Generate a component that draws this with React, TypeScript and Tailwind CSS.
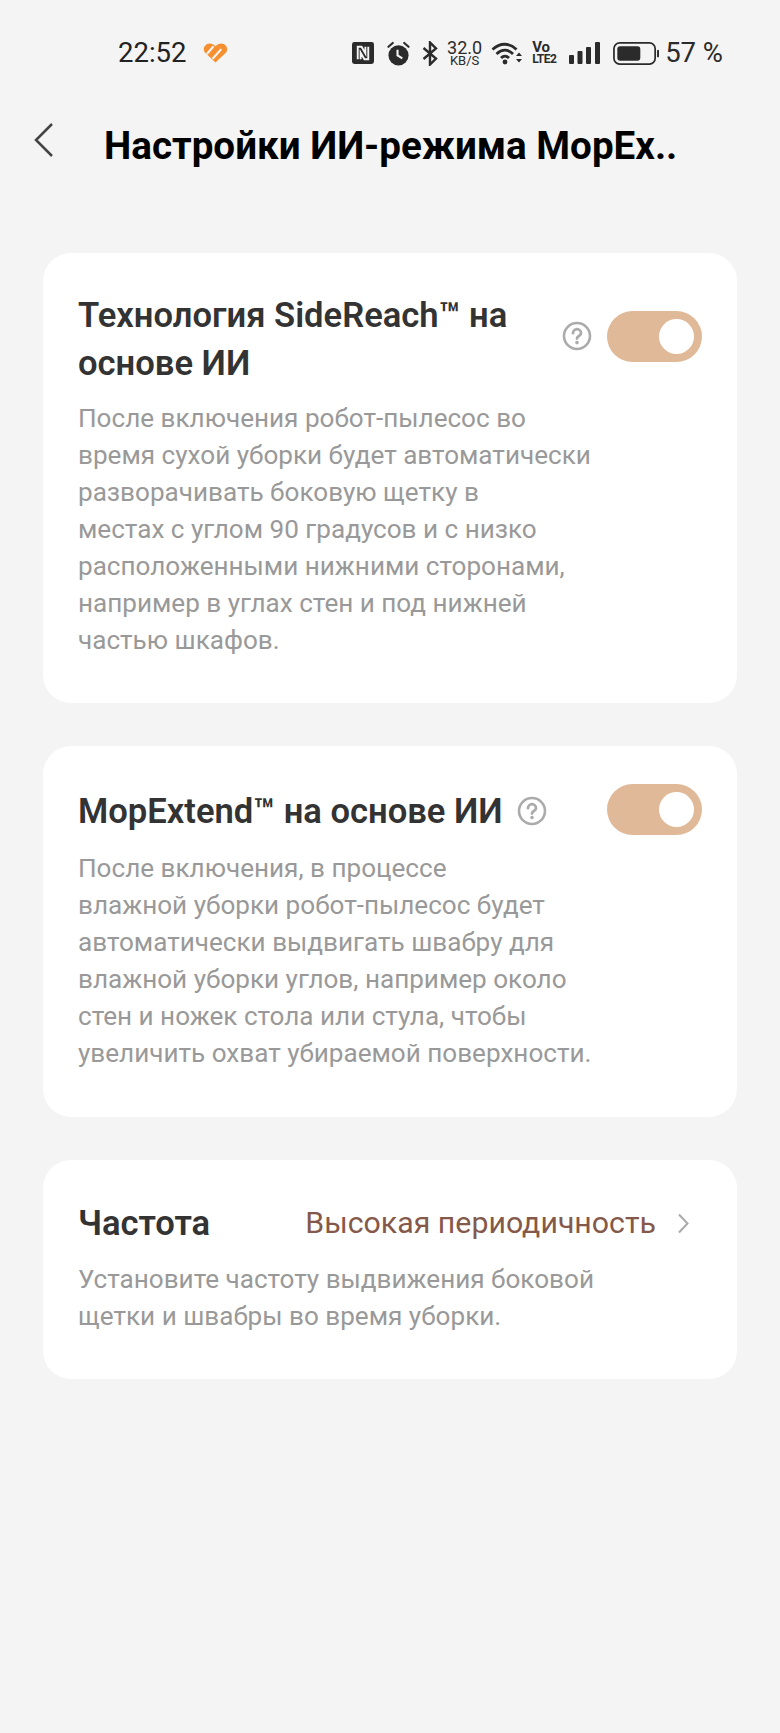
import React from 'react';

const Toggle = () => (
  <div className="flex h-[51px] w-[95px] shrink-0 items-center justify-end rounded-full bg-[#e0b998] pr-[8px]">
    <div className="h-[35px] w-[35px] rounded-full bg-white" />
  </div>
);

const HelpIcon = () => (
  <svg width="30" height="30" viewBox="0 0 30 30" fill="none" className="shrink-0">
    <circle cx="15" cy="15" r="13" stroke="#ababab" strokeWidth="2.600" />
    <path d="M11 12.200a4 4 0 0 1 8 0c0 2.600-4 2.800-4 5.400" stroke="#ababab" strokeWidth="2.800" strokeLinecap="round" />
    <circle cx="15" cy="21.600" r="1.800" fill="#ababab" />
  </svg>
);

const StatusBar = () => (
  <div className="flex h-[52px] items-center pl-[118px] pr-[57px] pt-[2px] text-[#222222]">
    <span className="text-[27.500px] leading-none">22:52</span>
    {/* heart */}
    <svg width="25" height="22" viewBox="0 0 26 22" className="ml-[17px]">
      <path d="M13 21 2 10.500C-1 7 2 1 7 1c2.500 0 4 1 6 3 2-2 3.500-3 6-3 5 0 8 6 5 9.500Z" fill="#f58f2f" />
      <path d="M4 12 11 4M10 17 19 7" stroke="#f4f4f4" strokeWidth="2.200" />
    </svg>
    <div className="ml-auto flex items-center">
      {/* nfc */}
      <svg width="22" height="22" viewBox="0 0 23 23">
        <rect width="23" height="23" rx="2.500" fill="#2b2b2b" />
        <path d="M6 18V5h4l4 7V5M17 5v13h-4l-4-7v7" stroke="#f4f4f4" strokeWidth="2" fill="none" />
      </svg>
      {/* alarm */}
      <svg width="23" height="25" viewBox="0 0 24 26" className="ml-[13px]">
        <circle cx="12" cy="15" r="10.500" fill="#2b2b2b" />
        <path d="M11 9v6l5 3" stroke="#f4f4f4" strokeWidth="2.200" fill="none" />
        <path d="M1.500 6 6 2M22.500 6 18 2" stroke="#2b2b2b" strokeWidth="2.200" strokeLinecap="round" />
      </svg>
      {/* bluetooth */}
      <svg width="16" height="25" viewBox="0 0 16 24" fill="none" className="ml-[12px]">
        <path d="M1.500 6.500 14 17l-6 6V1l6 6L1.500 17.500" stroke="#2b2b2b" strokeWidth="2.400" />
      </svg>
      <div className="ml-[9px] flex w-[35px] flex-col items-center whitespace-nowrap text-[#2b2b2b]">
        <span className="text-[18px] leading-[15px]">32.0</span>
        <span className="text-[13px] leading-[12px]">KB/S</span>
      </div>
      {/* wifi */}
      <svg width="32" height="24" viewBox="0 0 31 24" fill="none" className="ml-[9px]">
        <path d="M1 8.500C8.500 1.500 17.500 1.500 25 8.500M5 13C10.500 8 16.500 8 21.500 13M9.500 17c2.500-2.500 5.500-2.500 8 0" stroke="#2b2b2b" strokeWidth="2.800" />
        <circle cx="13.500" cy="21" r="2.400" fill="#2b2b2b" />
        <path d="m24.500 15 3-3.500 3 3.500ZM24.500 18l3 3.500 3-3.500Z" fill="#2b2b2b" />
      </svg>
      <div className="ml-[9px] flex w-[27px] flex-col items-start whitespace-nowrap text-[#2b2b2b]">
        <span className="text-[15px] font-bold leading-[12px]">Vo</span>
        <span className="text-[12px] font-bold leading-[12px] tracking-[-0.5px]">LTE2</span>
      </div>
      {/* signal */}
      <svg width="31" height="22" viewBox="0 0 31 22" className="ml-[10px]">
        <rect x="0" y="13" width="5" height="9" rx="1" fill="#2b2b2b" />
        <rect x="8.500" y="9" width="5" height="13" rx="1" fill="#2b2b2b" />
        <rect x="17" y="5" width="5" height="17" rx="1" fill="#2b2b2b" />
        <rect x="26" y="0" width="5" height="22" rx="1" fill="#2b2b2b" />
      </svg>
      {/* battery */}
      <svg width="48" height="23" viewBox="0 0 48 24" fill="none" className="ml-[12px]">
        <rect x="1" y="1" width="43" height="22" rx="6" stroke="#2b2b2b" strokeWidth="1.800" />
        <rect x="4.500" y="4.500" width="24" height="15" rx="3" fill="#2b2b2b" />
        <rect x="46" y="8" width="2" height="8" rx="1" fill="#2b2b2b" />
      </svg>
      <span className="ml-[5px] whitespace-nowrap text-[27.500px] leading-none text-[#2b2b2b]">57 %</span>
    </div>
  </div>
);

export default function App() {
  return (
    <div className="h-[1733px] w-[780px] overflow-hidden bg-[#f4f4f4] font-['Roboto',sans-serif]">
      <div className="pt-[26px]">
        <StatusBar />
      </div>

      <div className="mt-[44px] flex items-center pl-[34px]">
        <svg width="20" height="36" viewBox="0 0 20 36" fill="none" className="-mt-[12px]">
          <path d="M18 2 2 18l16 16" stroke="#444444" strokeWidth="2.500" />
        </svg>
        <h1 className="ml-[50px] whitespace-nowrap text-[38.600px] font-bold leading-[48px] text-black">Настройки ИИ-режима MopEx..</h1>
      </div>

      <div className="mt-[83px] flex flex-col gap-[43px] px-[43px]">
        <section className="h-[450px] rounded-[28px] bg-white px-[35px] pt-[38px]">
          <div className="flex items-center">
            <h2 className="w-[484px] shrink-0 text-[34.600px] font-semibold leading-[48px] text-[#333333]">Технология SideReach™ на основе ИИ</h2>
            <div className="-mt-[6px] flex items-center gap-[15px]">
              <HelpIcon />
              <Toggle />
            </div>
          </div>
          <p className="mt-[13px] text-[26.100px] leading-[37px] text-[#999999]">
            После включения робот-пылесос во<br />
            время сухой уборки будет автоматически<br />
            разворачивать боковую щетку в<br />
            местах с углом 90 градусов и с низко<br />
            расположенными нижними сторонами,<br />
            например в углах стен и под нижней<br />
            частью шкафов.
          </p>
        </section>

        <section className="h-[371px] rounded-[28px] bg-white px-[35px] pt-[35px]">
          <div className="flex items-center">
            <h2 className="mt-[6px] whitespace-nowrap text-[34.600px] font-semibold leading-[48px] text-[#333333]">MopExtend™ на основе ИИ</h2>
            <div className="ml-[14px] mt-[5px]">
              <HelpIcon />
            </div>
            <div className="ml-auto mt-[2px]">
              <Toggle />
            </div>
          </div>
          <p className="mt-[15px] text-[26.100px] leading-[37px] text-[#999999]">
            После включения, в процессе<br />
            влажной уборки робот-пылесос будет<br />
            автоматически выдвигать швабру для<br />
            влажной уборки углов, например около<br />
            стен и ножек стола или стула, чтобы<br />
            увеличить охват убираемой поверхности.
          </p>
        </section>

        <section className="h-[219px] rounded-[28px] bg-white pl-[35px] pr-[48px] pt-[39px]">
          <div className="flex h-[48px] items-center">
            <h2 className="text-[34.600px] font-semibold leading-[48px] text-[#333333]">Частота</h2>
            <span className="ml-auto whitespace-nowrap text-[30.300px] text-[#85594a]">Высокая периодичность</span>
            <svg width="12" height="21" viewBox="0 0 12 21" fill="none" className="ml-[21px]">
              <path d="M2 1.500l8.500 9-8.500 9" stroke="#aaaaaa" strokeWidth="2" />
            </svg>
          </div>
          <p className="mt-[14px] text-[26.100px] leading-[37px] text-[#999999]">
            Установите частоту выдвижения боковой<br />
            щетки и швабры во время уборки.
          </p>
        </section>
      </div>
    </div>
  );
}
